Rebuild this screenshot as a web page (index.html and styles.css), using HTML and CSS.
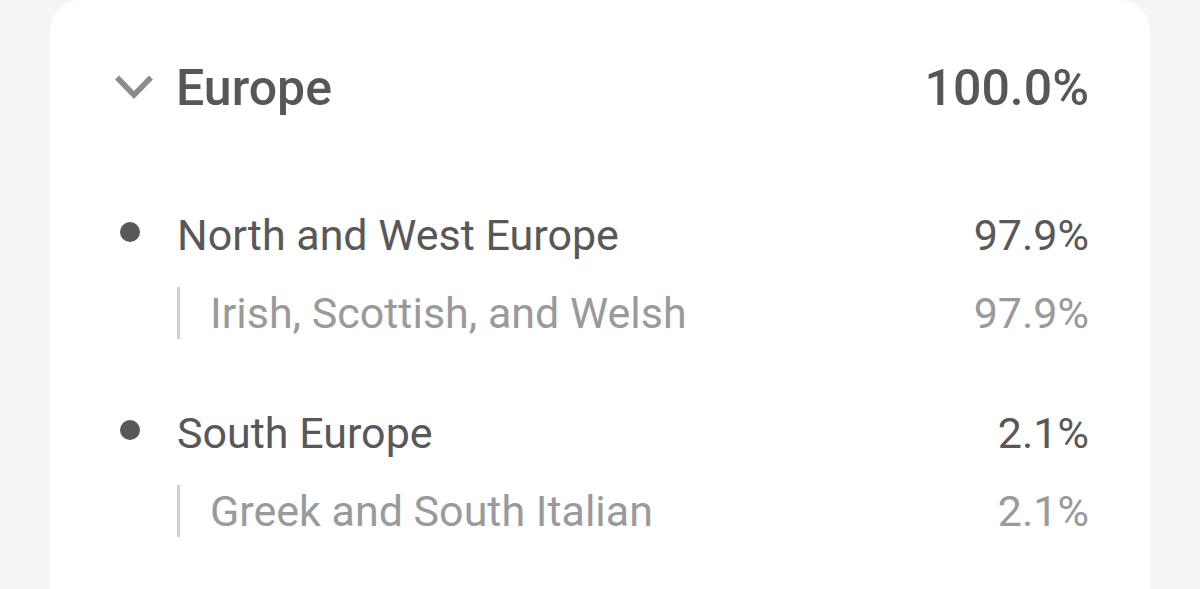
FILE: index.html
```html
<!DOCTYPE html>
<html lang="en">
<head>
<meta charset="utf-8">
<title>Europe</title>
<link rel="stylesheet" href="styles.css">
</head>
<body>
<div class="page">
  <section class="card">
    <div class="region">
      <span class="icon-col">
        <svg class="chevron" width="38" height="26" viewBox="0 0 38 26" aria-hidden="true">
          <polyline points="2,3.5 19,21 36,3.5" fill="none" stroke="#8c8c8c" stroke-width="5.5" stroke-linejoin="miter"/>
        </svg>
      </span>
      <span class="region-name">Europe</span>
      <span class="region-pct">100.0%</span>
    </div>

    <div class="groups">
      <div class="group">
        <div class="item">
          <span class="icon-col"><span class="bullet"></span></span>
          <span class="item-name">North and West Europe</span>
          <span class="item-pct">97.9%</span>
        </div>
        <div class="sub">
          <span class="sub-name">Irish, Scottish, and Welsh</span>
          <span class="sub-pct">97.9%</span>
        </div>
      </div>

      <div class="group">
        <div class="item">
          <span class="icon-col"><span class="bullet"></span></span>
          <span class="item-name">South Europe</span>
          <span class="item-pct">2.1%</span>
        </div>
        <div class="sub">
          <span class="sub-name">Greek and South Italian</span>
          <span class="sub-pct">2.1%</span>
        </div>
      </div>
    </div>
  </section>
</div>
</body>
</html>
```

FILE: styles.css
```css
html, body {
  margin: 0;
  padding: 0;
}

body {
  background: #f5f5f5;
  font-family: Roboto, "Liberation Sans", sans-serif;
  overflow: hidden;
}

.page {
  padding-left: 50px;
  height: 589px;
  overflow: hidden;
}

.card {
  width: 1100px;
  height: 640px;
  box-sizing: border-box;
  background: #ffffff;
  border-radius: 30px;
  padding: 58px 61px 0 65px;
}

.region {
  display: flex;
  align-items: center;
  height: 60px;
}

.icon-col {
  width: 63px;
  flex: none;
  display: flex;
  align-items: center;
}

.chevron {
  display: block;
  margin-top: -2px;
}

.region-name,
.region-pct {
  font-size: 50px;
  font-weight: 500;
  color: #575757;
  line-height: 60px;
}

.region-name {
  margin-left: -2px;
}

.region-pct,
.item-pct,
.sub-pct {
  margin-left: auto;
}

.groups {
  display: flex;
  flex-direction: column;
  gap: 69px;
  margin-top: 92px;
}

.group {
  display: flex;
  flex-direction: column;
  gap: 27px;
}

.item {
  display: flex;
  align-items: center;
  height: 50px;
}

.bullet {
  width: 20px;
  height: 20px;
  border-radius: 50%;
  background: #585858;
  margin-left: 5px;
  margin-top: -7px;
}

.item-name,
.item-pct {
  font-size: 43px;
  line-height: 50px;
  color: #585858;
}

.item-name {
  margin-left: -1px;
}

.sub {
  display: flex;
  align-items: center;
  height: 52px;
  margin-left: 62px;
  border-left: 3px solid #d0d0d0;
  padding-left: 30px;
}

.sub-name,
.sub-pct {
  font-size: 43px;
  line-height: 52px;
  color: #9a9a9a;
}
```
